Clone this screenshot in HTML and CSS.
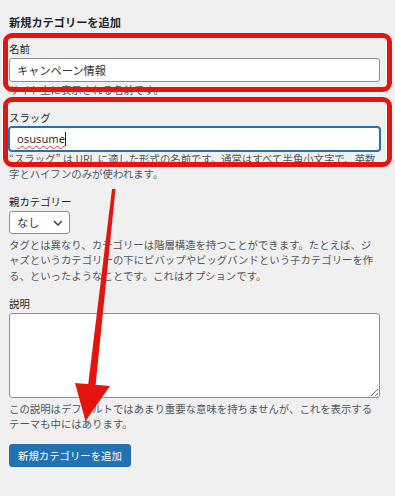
FILE: index.html
```html
<!DOCTYPE html>
<html lang="ja">
  <head>
    <meta charset="UTF-8" />
    <meta name="viewport" content="width=device-width, initial-scale=1.0" />
    <title>新規カテゴリーを追加</title>
    <link rel="stylesheet" href="styles.css">
  </head>
  <body>
    <div id="col-left">
      <h2 class="heading">新規カテゴリーを追加</h2>
      <form id="addtag">
        <div class="form-field">
          <label for="tag-name">名前</label>
          <input type="text" id="tag-name" class="text-input" value="キャンペーン情報" />
          <p class="description">サイト上に表示される名前です。</p>
        </div>
        <div class="form-field">
          <label for="tag-slug">スラッグ</label>
          <div class="input-wrap">
            <input type="text" id="tag-slug" class="text-input focused" value="osusume" />
            <span class="spell" aria-hidden="true">osusume</span>
          </div>
          <p class="description">“スラッグ” は URL に適した形式の名前です。通常はすべて半角小文字で、英数字とハイフンのみが使われます。</p>
        </div>
        <div class="form-field">
          <label for="parent">親カテゴリー</label>
          <div class="select-wrap">
            <select id="parent" class="postform">
              <option value="-1">なし</option>
            </select>
            <svg class="chevron" width="10" height="6" viewBox="0 0 10 6">
              <path d="M1 1 L5 5 L9 1" fill="none" stroke="#3c434a" stroke-width="1.5" />
            </svg>
          </div>
          <p class="description spaced">タグとは異なり、カテゴリーは階層構造を持つことができます。たとえば、ジャズというカテゴリーの下にビバップやビッグバンドという子カテゴリーを作る、といったようなことです。これはオプションです。</p>
        </div>
        <div class="form-field">
          <label for="tag-description">説明</label>
          <textarea id="tag-description"></textarea>
          <p class="description spaced">この説明はデフォルトではあまり重要な意味を持ちませんが、これを表示するテーマも中にはあります。</p>
        </div>
        <p class="submit">
          <button type="button" class="button-primary">新規カテゴリーを追加</button>
        </p>
      </form>
    </div>

    <!-- annotations drawn over the screenshot -->
    <div class="mark mark-name"></div>
    <div class="mark mark-slug"></div>
    <svg class="arrow" width="395" height="496" viewBox="0 0 395 496">
      <polygon points="112,189 115.5,189 95.5,386 88,386" fill="#e3150f" />
      <polygon points="75,383 110,386 85.5,421" fill="#e3150f" />
    </svg>
  </body>
</html>
```

FILE: styles.css
```css
* {
  box-sizing: border-box;
}

body {
  margin: 0;
  padding: 0;
  width: 395px;
  height: 496px;
  background: #f0f0f1;
  font-family: "Noto Sans CJK JP", "Noto Sans", sans-serif;
  color: #3c434a;
  font-size: 10.4px;
  position: relative;
  overflow: hidden;
}

#col-left {
  padding: 14px 15px 0 9px;
}

.heading {
  margin: 0 0 11px;
  font-size: 11.2px;
  line-height: 16px;
  font-weight: 700;
  color: #1d2327;
}

.form-field {
  margin-bottom: 12px;
}

.form-field label {
  display: block;
  margin-bottom: 1px;
  font-size: 10.4px;
  line-height: 16px;
  color: #1d2327;
}

.text-input {
  display: block;
  width: 371px;
  height: 24px;
  margin: 0;
  padding: 0 7px;
  border: 1px solid #8c8f94;
  border-radius: 3px;
  background: #fff;
  font-family: "Noto Sans", "Noto Sans CJK JP", sans-serif;
  font-size: 11.2px;
  color: #2c3338;
  outline: none;
}

.focused {
  border-color: #2271b1;
  box-shadow: 0 0 0 1px #2271b1;
}

.input-wrap,
.select-wrap {
  position: relative;
}

/* spellcheck squiggle and caret laid over the slug value */
.spell {
  position: absolute;
  left: 8px;
  top: 0;
  line-height: 24px;
  font-family: "Noto Sans", "Noto Sans CJK JP", sans-serif;
  font-size: 11.2px;
  color: transparent;
  text-decoration: underline wavy #e0302a;
  text-decoration-thickness: 1px;
  text-underline-offset: 2px;
  pointer-events: none;
}

.spell::after {
  content: "";
  position: absolute;
  right: -1px;
  top: 5px;
  width: 1px;
  height: 14px;
  background: #1d2327;
}

.description {
  margin: 0;
  font-size: 10.4px;
  line-height: 15.6px;
  color: #50575e;
}

.description.spaced {
  margin-top: 3px;
}

.select-wrap {
  width: 61px;
}

.postform {
  display: block;
  width: 61px;
  height: 23px;
  margin: 0;
  padding: 0 0 0 7px;
  border: 1px solid #8c8f94;
  border-radius: 3px;
  background: #fff;
  appearance: none;
  font-family: inherit;
  font-size: 11.2px;
  color: #2c3338;
}

.chevron {
  position: absolute;
  right: 7px;
  top: 9px;
}

textarea {
  display: block;
  width: 371px;
  height: 85px;
  margin: 0;
  border: 1px solid #8c8f94;
  border-radius: 3px;
  background: #fff;
  font-family: inherit;
  resize: both;
}

.submit {
  margin: 0;
}

.button-primary {
  height: 23px;
  padding: 0 8px;
  border: 1px solid #2271b1;
  border-radius: 3px;
  background: #2271b1;
  color: #fff;
  font-family: inherit;
  font-size: 10.4px;
  cursor: pointer;
}

.mark {
  position: absolute;
  left: 3px;
  width: 389px;
  border: 5px solid #e3150f;
  border-radius: 9px;
}

.mark-name {
  top: 33px;
  height: 59px;
}

.mark-slug {
  top: 97px;
  height: 70px;
}

.arrow {
  position: absolute;
  left: 0;
  top: 0;
}
```
